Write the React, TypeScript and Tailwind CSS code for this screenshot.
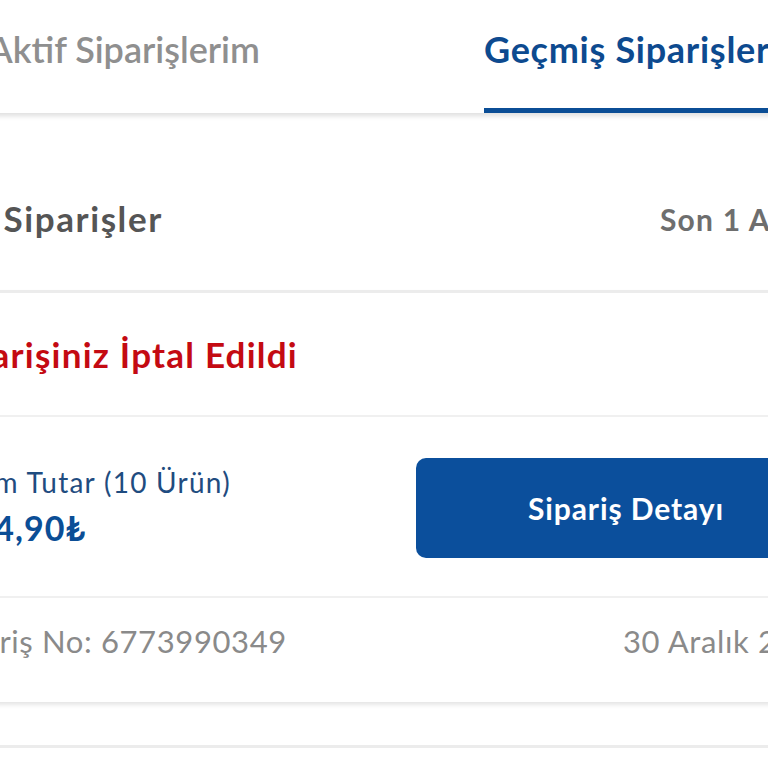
import React from 'react'

export default function App() {
  return (
    <div className="w-[768px] h-[768px] overflow-hidden bg-white font-['Lato','Noto_Sans',sans-serif]">
      <div className="w-[1100px] -ml-[60px]">
        {/* sekmeler */}
        <div className="relative z-10 bg-white shadow-[0_3px_5px_rgba(0,0,0,0.13)]">
          <div className="grid grid-cols-[496px_1fr] h-[113px] pl-[48px]">
            <div className="pt-[31px]">
              <span className="text-[36px] leading-[36px] font-semibold text-[#8f8f8f] whitespace-nowrap">Aktif Siparişlerim</span>
            </div>
            <div className="flex flex-col justify-between">
              <div className="pt-[31px]">
                <span className="text-[36px] leading-[36px] font-bold tracking-[0.02em] text-[#0d4a8f] whitespace-nowrap">Geçmiş Siparişlerim</span>
              </div>
              <div className="h-[5px] w-[400px] bg-[#0b4e96]" />
            </div>
          </div>
        </div>

        {/* başlık */}
        <div className="grid grid-cols-[720px_1fr] h-[177px] items-start pt-[88px]">
          <span className="-ml-[18px] text-[35px] leading-[34px] font-bold tracking-[0.045em] text-[#555555] whitespace-nowrap">Tüm Siparişler</span>
          <span className="text-[30px] leading-[30px] font-bold tracking-[0.04em] text-[#6e6e6e] whitespace-nowrap pt-[3px]">Son 1 Ay</span>
        </div>

        {/* sipariş kartı */}
        <div className="border-t-[3px] border-[#ececec] bg-white shadow-[0_3px_4px_rgba(0,0,0,0.1)]">
          <div className="h-[124px] flex items-center border-b-2 border-[#f0f0f0]">
            <span className="text-[35px] font-bold tracking-[0.035em] text-[#c40a12] whitespace-nowrap">Siparişiniz İptal Edildi</span>
          </div>

          <div className="h-[181px] grid grid-cols-[476px_1fr] border-b-2 border-[#f0f0f0]">
            <div className="flex flex-col pt-[48px] -ml-[17px]">
              <span className="text-[28px] leading-[34px] tracking-[0.045em] text-[#1f4c80] whitespace-nowrap">Toplam Tutar (10 Ürün)</span>
              <span className="mt-[4px] text-[34px] leading-[50px] font-bold tracking-[0.03em] text-[#0b4e96] whitespace-nowrap">1.234,90₺</span>
            </div>
            <div className="pt-[41px]">
              <button className="w-[420px] h-[100px] rounded-[10px] bg-[#0b4f9c] text-white text-[30px] font-bold tracking-[0.03em]">
                Sipariş Detayı
              </button>
            </div>
          </div>

          <div className="h-[104px] grid grid-cols-[683px_1fr] items-center pb-[18px]">
            <span className="text-[31px] tracking-[0.02em] text-[#8a8a8a] whitespace-nowrap">Sipariş No: 6773990349</span>
            <span className="text-[31px] tracking-[0.02em] text-[#8a8a8a] whitespace-nowrap">30 Aralık 2024</span>
          </div>
        </div>

        <div className="h-[43px]" />
        <div className="border-t-[3px] border-[#ececec] h-[40px] bg-white" />
      </div>
    </div>
  )
}
